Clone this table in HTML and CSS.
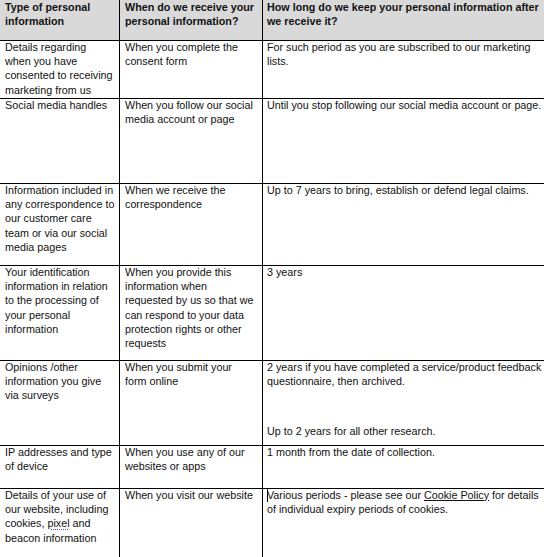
FILE: index.html
```html
<!DOCTYPE html>
<html>
<head>
<meta charset="utf-8">
<link rel="stylesheet" href="styles.css">
</head>
<body>
<table class="retention">
  <colgroup>
    <col class="c1">
    <col class="c2">
    <col class="c3">
  </colgroup>
  <thead>
    <tr class="rh">
      <th>Type of personal<br>information</th>
      <th>When do we receive your<br>personal information?</th>
      <th>How long do we keep your personal information after<br>we receive it?</th>
    </tr>
  </thead>
  <tbody>
    <tr class="r1">
      <td><p>Details regarding<br>when you have<br>consented to receiving<br>marketing from us</p></td>
      <td><p>When you complete the<br>consent form</p></td>
      <td><p>For such period as you are subscribed to our marketing<br>lists.</p></td>
    </tr>
    <tr class="r2">
      <td><p>Social media handles</p></td>
      <td><p>When you follow our social<br>media account or page</p></td>
      <td><p>Until you stop following our social media account or page.</p></td>
    </tr>
    <tr class="r3">
      <td><p>Information included in<br>any correspondence to<br>our customer care<br>team or via our social<br>media pages</p></td>
      <td><p>When we receive the<br>correspondence</p></td>
      <td><p>Up to 7 years to bring, establish or defend legal claims.</p></td>
    </tr>
    <tr class="r4">
      <td><p>Your identification<br>information in relation<br>to the processing of<br>your personal<br>information</p></td>
      <td><p>When you provide this<br>information when<br>requested by us so that we<br>can respond to your data<br>protection rights or other<br>requests</p></td>
      <td><p>3 years</p></td>
    </tr>
    <tr class="r5">
      <td><p>Opinions /other<br>information you give<br>via surveys</p></td>
      <td><p>When you submit your<br>form online</p></td>
      <td>
        <p>2 years if you have completed a service/product feedback<br>questionnaire, then archived.</p>
        <p class="later">Up to 2 years for all other research.</p>
      </td>
    </tr>
    <tr class="r6">
      <td><p>IP addresses and type<br>of device</p></td>
      <td><p>When you use any of our<br>websites or apps</p></td>
      <td><p>1 month from the date of collection.</p></td>
    </tr>
    <tr class="r7">
      <td><p>Details of your use of<br>our website, including<br>cookies, <span class="spell">pixel</span> and<br>beacon information</p></td>
      <td><p>When you visit our website</p></td>
      <td><p><span class="caret"></span>Various periods - please see our <span class="link">Cookie Policy</span> for details<br>of individual expiry periods of cookies.</p></td>
    </tr>
  </tbody>
</table>
</body>
</html>
```
FILE: styles.css
```css
html, body {
  margin: 0;
  padding: 0;
  background: #ffffff;
  overflow: hidden;
}

.retention {
  border-collapse: collapse;
  table-layout: fixed;
  width: 560px;
  margin: -1px 0 0 -1px;
  font-family: "Liberation Sans", Arial, sans-serif;
  font-size: 10.75px;
  line-height: 14.35px;
  color: #111111;
}

.c1 { width: 120px; }
.c2 { width: 143px; }
.c3 { width: 297px; }

.retention th,
.retention td {
  border: 1px solid #000000;
  padding: 0 2px 0 5px;
  vertical-align: top;
  text-align: left;
  white-space: nowrap;
}

.retention td:last-child,
.retention th:last-child {
  padding-left: 4px;
}

.retention th {
  background: #d9d9d9;
  font-weight: bold;
}

.retention p {
  margin: -1.5px 0 0 0;
}

.retention p.later {
  margin-top: 36px;
}

.rh { height: 41px; }
.r1 { height: 58px; }
.r2 { height: 85px; }
.r3 { height: 82px; }
.r4 { height: 95px; }
.r5 { height: 85px; }
.r6 { height: 43px; }
.r7 { height: 72px; }

.spell {
  text-decoration: underline dotted #5b4fd6;
  text-underline-offset: 2px;
}

.link {
  text-decoration: underline;
}

.caret {
  display: inline-block;
  width: 1px;
  height: 13px;
  margin-right: -1px;
  background: #000000;
  vertical-align: -3px;
}
```
